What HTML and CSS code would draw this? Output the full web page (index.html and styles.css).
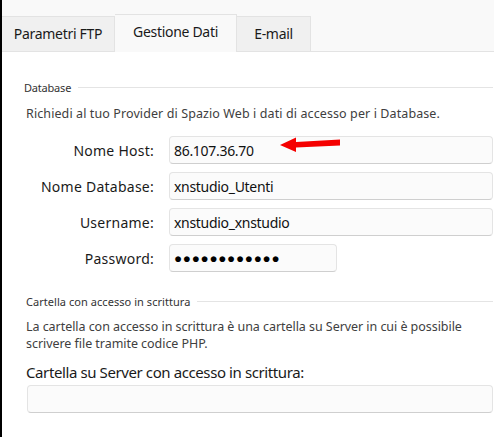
FILE: index.html
```html
<!DOCTYPE html>
<html lang="it">
<head>
<meta charset="utf-8">
<title>Gestione Dati</title>
<link rel="stylesheet" href="styles.css">
</head>
<body>
<div class="window">
  <div class="tabbar">
    <div class="tab tab-first">Parametri FTP</div>
    <div class="tab tab-active">Gestione Dati</div>
    <div class="tab tab-last">E-mail</div>
    <div class="tab-fill"></div>
  </div>
  <div class="content">
    <div class="legend legend-db"><span>Database</span><i class="rule"></i></div>
    <p class="desc desc-db">Richiedi al tuo Provider di Spazio Web i dati di accesso per i Database.</p>
    <div class="form">
      <label class="lbl">Nome Host:</label>
      <div class="field field-wide">
        <span class="val">86.107.36.70</span>
        <svg class="arrow" width="64" height="18" viewBox="0 0 64 18">
          <polygon points="0,8 16,0.5 16,5 60,2.5 60,8.5 16,10.5 16,15" fill="#f50000"/>
        </svg>
      </div>
      <label class="lbl">Nome Database:</label>
      <div class="field field-wide"><span class="val">xnstudio_Utenti</span></div>
      <label class="lbl">Username:</label>
      <div class="field field-wide"><span class="val">xnstudio_xnstudio</span></div>
      <label class="lbl">Password:</label>
      <div class="field field-pass"><span class="val dots">●●●●●●●●●●●●</span></div>
    </div>
    <div class="legend legend-dir"><span>Cartella con accesso in scrittura</span><i class="rule"></i></div>
    <p class="desc desc-dir">La cartella con accesso in scrittura è una cartella su Server in cui è possibile scrivere file tramite codice PHP.</p>
    <div class="big-label">Cartella su Server con accesso in scrittura:</div>
    <div class="field field-full"></div>
  </div>
</div>
</body>
</html>
```
FILE: styles.css
```css
html, body {
  margin: 0;
  padding: 0;
  background: #ffffff;
}
body {
  font-family: "Noto Sans", "Open Sans", sans-serif;
  color: #1b1b1b;
}
.window {
  border-left: 2px solid #000;
  height: 437px;
  box-sizing: border-box;
  overflow: hidden;
}
.tabbar {
  display: flex;
  align-items: flex-end;
  height: 52px;
  background: #f9f9f9;
}
.tab {
  box-sizing: border-box;
  display: flex;
  align-items: center;
  justify-content: center;
  font-size: 14px;
  letter-spacing: -0.3px;
  color: #1a1a1a;
  border: 1px solid #e3e3e3;
}
.tab-first {
  width: 113px;
  height: 36px;
  background: #f0f0f0;
  border-left: none;
  padding-bottom: 2px;
}
.tab-active {
  width: 122px;
  height: 38px;
  background: #f9f9f9;
  border-bottom: none;
  border-left: none;
  padding-bottom: 5px;
}
.tab-last {
  width: 74px;
  height: 36px;
  background: #f0f0f0;
  border-left: none;
  padding-bottom: 2px;
}
.tab-fill {
  flex: 1;
  height: 1px;
  background: #e3e3e3;
}
.content {
  padding: 0 1px 0 22px;
}
.legend {
  display: flex;
  align-items: center;
  gap: 7px;
  height: 14px;
  font-size: 11px;
  letter-spacing: -0.2px;
  color: #333;
}
.legend .rule {
  flex: 1;
  height: 1px;
  background: #e4e4e4;
}
.legend-db {
  margin-top: 28px;
}
.legend-dir {
  margin-top: 22px;
  padding-left: 2px;
  letter-spacing: 0.05px;
}
.desc {
  margin: 0;
  padding-left: 2px;
  font-size: 12.5px;
  color: #404040;
  line-height: 17px;
}
.desc-db {
  margin-top: 11px;
  letter-spacing: 0.1px;
}
.desc-dir {
  margin-top: 10px;
  padding-right: 20px;
  letter-spacing: -0.05px;
}
.form {
  display: grid;
  grid-template-columns: 130px 1fr;
  column-gap: 15px;
  row-gap: 8px;
  margin-top: 14px;
  align-items: center;
}
.lbl {
  text-align: right;
  font-size: 14px;
  letter-spacing: 0.25px;
  color: #1a1a1a;
}
.field {
  position: relative;
  box-sizing: border-box;
  height: 28px;
  background: #fbfbfb;
  border: 1px solid #e4e4e4;
  border-bottom-color: #cfcfcf;
  border-radius: 4px;
  display: flex;
  align-items: center;
  padding-left: 4px;
}
.field-pass {
  width: 168px;
}
.val {
  font-size: 14px;
  letter-spacing: -0.3px;
  color: #111;
}
.dots {
  font-size: 13.5px;
  letter-spacing: 0.7px;
  color: #000;
}
.arrow {
  position: absolute;
  left: 110px;
  top: 0px;
}
.big-label {
  margin-top: 10px;
  padding-left: 2px;
  font-size: 15px;
  letter-spacing: -0.4px;
  color: #1a1a1a;
  line-height: 20px;
}
.field-full {
  margin-top: 3px;
  margin-left: 3px;
}
```
